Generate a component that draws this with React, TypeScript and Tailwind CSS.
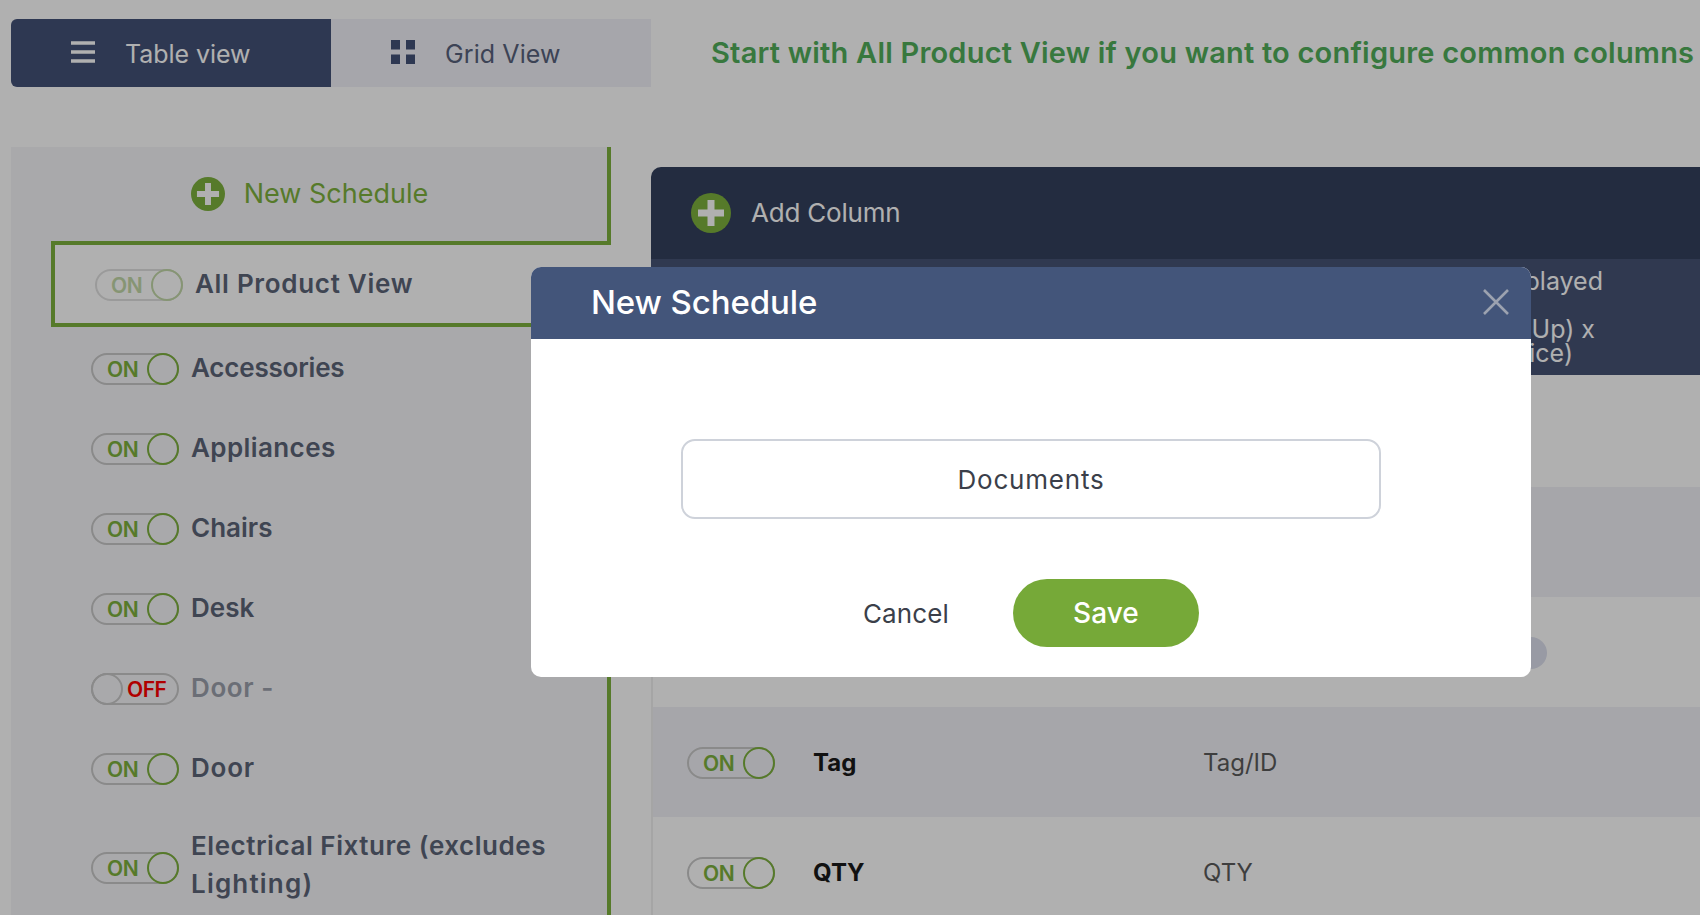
import React from "react";

const font = { fontFamily: '"Inter", "Open Sans", sans-serif' };

function Plus({ size }: { size: number }) {
  return (
    <svg width={size} height={size} viewBox="0 0 40 40" className="shrink-0">
      <circle cx="20" cy="20" r="20" fill="#7db13d" />
      <path d="M7 20h26M20 7v26" stroke="#fff" strokeWidth="7" fill="none" />
    </svg>
  );
}

function Toggle({ on = true, faded = false }: { on?: boolean; faded?: boolean }) {
  return (
    <div className={`box-border flex h-[32px] w-[88px] shrink-0 items-center rounded-full border-2 ${faded ? "border-[#e0e0e0]" : "border-[#c8c8c8]"} ${on ? "justify-between" : ""}`}>
      {on ? (
        <>
          <span className={`pl-[14px] pt-[2px] text-[21px] font-semibold tracking-[-0.5px] ${faded ? "text-[#c3d8a8]" : "text-[#7db13d]"}`}>ON</span>
          <span className={`-mr-[2px] box-border h-[32px] w-[32px] shrink-0 rounded-full border-2 ${faded ? "border-[#c3d8a8]" : "border-[#7db13d]"}`} />
        </>
      ) : (
        <>
          <span className="-ml-[2px] box-border h-[32px] w-[32px] shrink-0 rounded-full border-2 border-[#c8c8c8]" />
          <span className="pl-[4px] pt-[2px] text-[21px] font-semibold tracking-[-0.5px] text-[#ff0000]">OFF</span>
        </>
      )}
    </div>
  );
}

const items = [
  { label: "Accessories", on: true, track: "tracking-[-0.2px]" },
  { label: "Appliances", on: true, track: "tracking-[0.4px]" },
  { label: "Chairs", on: true, track: "tracking-[0px]" },
  { label: "Desk", on: true, track: "tracking-[0px]" },
  { label: "Door -", on: false, track: "tracking-[0.6px]" },
  { label: "Door", on: true, track: "tracking-[0.8px]" },
];

export default function App() {
  return (
    <div className="relative h-[915px] w-[1700px] overflow-hidden bg-white" style={font}>
      <div className="flex items-center pl-[11px] pt-[19px]">
        <div className="flex h-[68px] w-[640px] shrink-0">
          <div className="flex w-[320px] items-center rounded-l-[6px] bg-[#435177] pl-[60px] text-[25px] text-white">
            <svg width="24" height="22" viewBox="0 0 24 22" className="mb-[3px] mr-[30px] shrink-0">
              <path d="M0 2h24M0 11h24M0 20h24" stroke="#fff" strokeWidth="3.4" fill="none" />
            </svg>
            <span className="pt-[4px] tracking-[-0.05px]">Table view</span>
          </div>
          <div className="flex w-[320px] items-center bg-[#f1f1f8] pl-[60px] text-[25px] text-[#58627c]">
            <svg width="24" height="24" viewBox="0 0 24 24" className="mb-[2px] mr-[30px] shrink-0" fill="#435177">
              <rect x="0" y="0" width="9" height="9.5" />
              <rect x="15" y="0" width="9" height="9.5" />
              <rect x="0" y="14.5" width="9" height="9.5" />
              <rect x="15" y="14.5" width="9" height="9.5" />
            </svg>
            <span className="pt-[4px] tracking-[0.1px]">Grid View</span>
          </div>
        </div>
        <div className="ml-[60px] whitespace-nowrap text-[29px] font-semibold tracking-[0.21px] text-[#51ae5b]">
          Start with All Product View if you want to configure common columns
        </div>
      </div>

      <div className="mt-[60px] flex items-start">
        <div className="ml-[11px] box-content h-[800px] w-[596px] shrink-0 border-r-4 border-[#7db13d] bg-[#f5f5f8]">
          <div className="flex h-[94px] items-center justify-center gap-[19px] pl-[1px] text-[27px] text-[#7db13d]">
            <Plus size={34} />
            New Schedule
          </div>
          <div className="ml-[40px] -mr-[4px] box-border flex h-[86px] items-center border-y-4 border-l-4 border-[#7db13d] bg-white pl-[40px]">
            <div className="pt-[2px]">
              <Toggle faded />
            </div>
            <span className="mb-[2px] ml-[12px] text-[26px] font-semibold tracking-[0.7px] text-[#5c6477]">All Product View</span>
          </div>
          <div className="mt-[2px] pl-[80px]">
            {items.map((it) => (
              <div key={it.label} className="flex h-[80px] items-center">
                <Toggle on={it.on} />
                <span className={`mb-[4px] ml-[12px] text-[26px] font-semibold ${it.track} ${it.on ? "text-[#5c6477]" : "text-[#9ba0ab]"}`}>{it.label}</span>
              </div>
            ))}
            <div className="flex h-[117px] items-center">
              <Toggle />
              <span className="mb-[5px] ml-[12px] w-[400px] text-[26px] font-semibold leading-[38px] tracking-[0.55px] text-[#5c6477]">
                Electrical Fixture (excludes <span className="tracking-[1.2px]">Lighting)</span>
              </span>
            </div>
          </div>
        </div>

        <div className="ml-[40px] mt-[20px] w-[1100px] shrink-0">
          <div className="flex h-[92px] items-center gap-[20px] rounded-tl-[10px] bg-[#34405d] pl-[40px] text-[26px] text-white">
            <Plus size={40} />
            <span className="mb-[1px] tracking-[-0.2px]">Add Column</span>
          </div>
          <div className="h-[116px] bg-[#465375] pl-[649px] text-[25px] leading-[24px] text-white">
            <div className="w-[303px] whitespace-nowrap pt-[10px] text-right">Column Displayed</div>
            <div className="mt-[24px] w-[295px] whitespace-nowrap text-right">(Mark Up) x</div>
            <div className="w-[273px] whitespace-nowrap text-right">(Unit Price)</div>
          </div>
          <div className="border-l-2 border-[#efefef]">
            <div className="h-[112px]" />
            <div className="h-[110px] bg-[#f1f1f6]" />
            <div className="flex h-[110px] items-center pl-[862px] pt-[2px]">
              <span className="h-[32px] w-[32px] rounded-full bg-[#dde0ee]" />
            </div>
            <div className="flex h-[110px] items-center bg-[#f1f1f6] pl-[34px] pt-[2px]">
              <Toggle />
              <span className="ml-[38px] w-[390px] text-[24px] font-bold text-[#191919]">Tag</span>
              <span className="text-[24px] text-[#5b5b5b]">Tag/ID</span>
            </div>
            <div className="flex h-[110px] items-center pl-[34px] pt-[2px]">
              <Toggle />
              <span className="ml-[38px] w-[390px] text-[24px] font-bold text-[#191919]">QTY</span>
              <span className="text-[24px] text-[#5b5b5b]">QTY</span>
            </div>
          </div>
        </div>
      </div>

      <div className="absolute inset-0 bg-black/[0.31]" />

      <div className="absolute left-[531px] top-[267px] h-[410px] w-[1000px] overflow-hidden rounded-[10px] bg-white">
        <div className="relative flex h-[72px] items-center bg-[#43557a] pb-[1px] pl-[60px] text-[33px] font-medium tracking-[-0.1px] text-white">
          New Schedule
          <svg width="26" height="26" viewBox="0 0 26 26" className="absolute right-[22px] top-[22px]">
            <path d="M1 1l24 24M25 1L1 25" stroke="#9ca2b0" strokeWidth="2.6" fill="none" />
          </svg>
        </div>
        <div className="mx-[150px] mt-[100px] flex h-[80px] items-center justify-center rounded-[14px] border-2 border-[#ced2da] text-[26px] tracking-[0.8px] text-[#3b3f4a]">
          Documents
        </div>
        <div className="mt-[60px] flex items-center pl-[332px]">
          <span className="text-[26px] tracking-[0.1px] text-[#3b3f4a]">Cancel</span>
          <button className="ml-[64px] h-[68px] w-[186px] rounded-full bg-[#76a938] text-[28px] font-medium text-white">Save</button>
        </div>
      </div>
    </div>
  );
}
